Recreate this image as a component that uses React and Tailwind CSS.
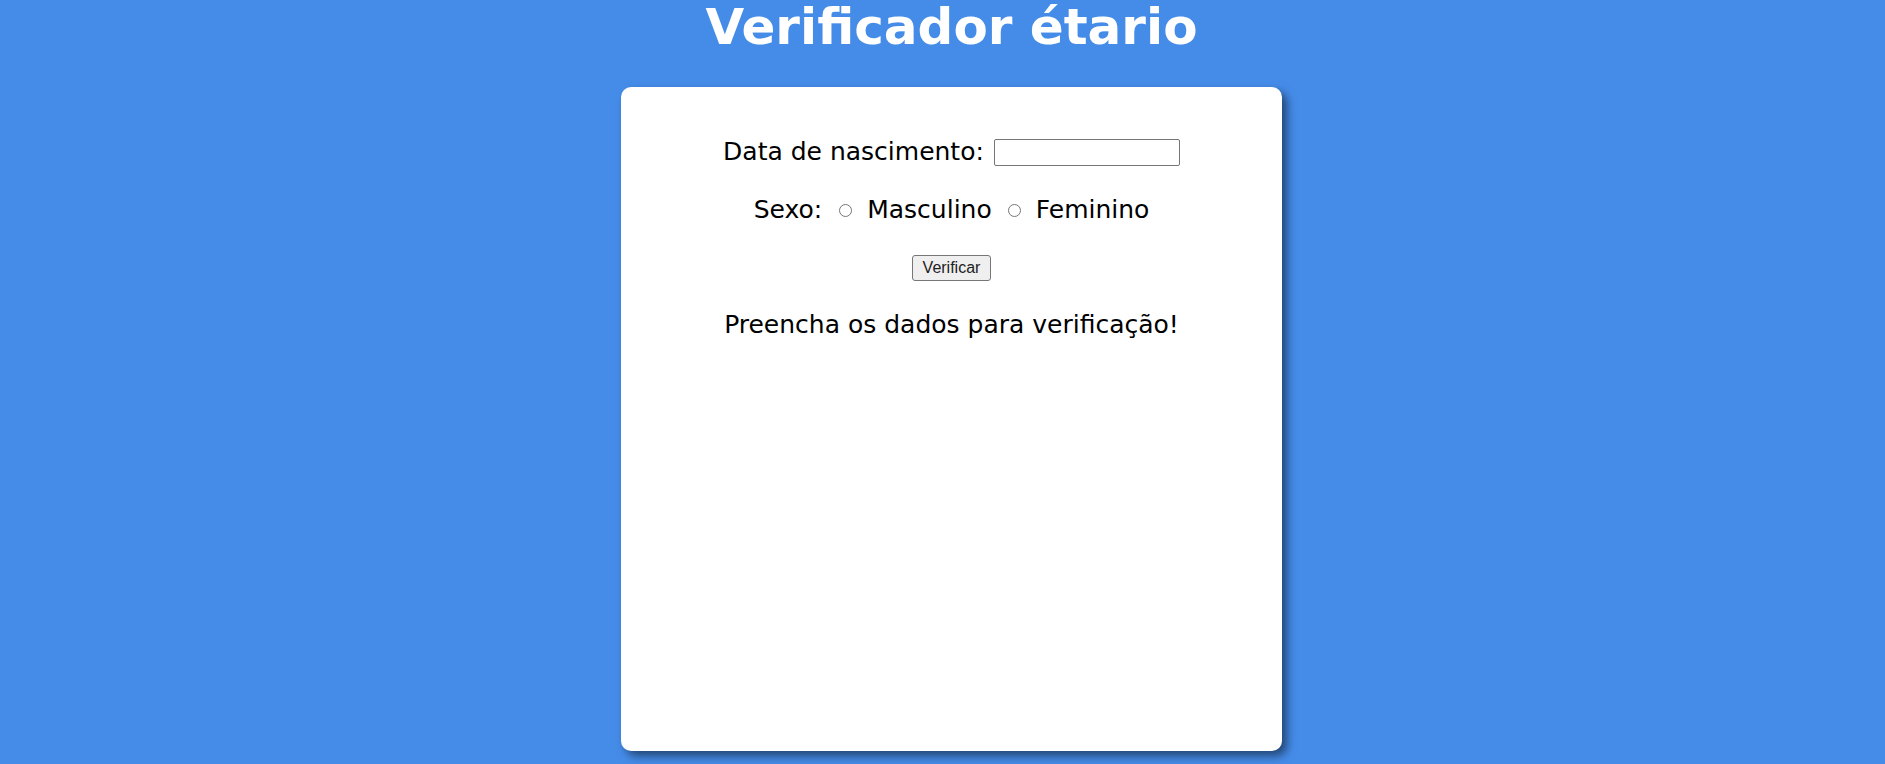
import React from 'react';

export default function App() {
  return (
    <div className="min-h-screen w-full bg-[#458ce9] pl-[18px] flex flex-col items-center font-['DejaVu_Sans',Verdana,sans-serif]">
      <h1 className="text-[50px] leading-[54px] font-bold text-white mt-0 mb-[33px]">
        Verificador étario
      </h1>

      <div className="w-[661px] h-[664px] bg-white rounded-[10px] shadow-[5px_5px_10px_rgba(0,0,0,0.5)] flex flex-col items-center pt-[51px] text-black text-[25px]">
        {/* data de nascimento */}
        <div className="h-[28px] flex items-center gap-[10px]">
          <label htmlFor="nasc">Data de nascimento:</label>
          <input
            id="nasc"
            type="text"
            className="w-[186px] h-[27px] border border-[#767676] rounded-[2px] bg-white"
          />
        </div>

        {/* sexo */}
        <div className="h-[28px] mt-[30px] flex items-center">
          <span>Sexo:</span>
          <input type="radio" name="sexo" id="m" className="ml-[17px] mr-[15px] w-[13px] h-[13px]" />
          <label htmlFor="m">Masculino</label>
          <input type="radio" name="sexo" id="f" className="ml-[16px] mr-[15px] w-[13px] h-[13px]" />
          <label htmlFor="f">Feminino</label>
        </div>

        <button
          type="button"
          className="mt-[31px] h-[26px] px-[10px] bg-[#efefef] border border-[#767676] rounded-[3px] text-[16px] leading-[18px] font-['Liberation_Sans',Arial,sans-serif] text-[#222]"
        >
          Verificar
        </button>

        <p className="mt-[30px] h-[28px] leading-[28px]">Preencha os dados para verificação!</p>
      </div>
    </div>
  );
}
